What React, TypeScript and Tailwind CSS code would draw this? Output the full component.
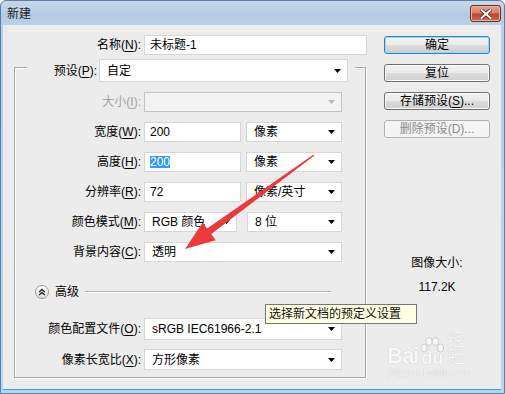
import * as React from "react";

const U = ({ children }: { children: React.ReactNode }) => (
  <span className="underline underline-offset-[2px]">{children}</span>
);

const Caret = ({ off }: { off?: boolean }) => (
  <svg width="7" height="4" viewBox="0 0 7 4" className="shrink-0">
    <polygon points="0,0 7,0 3.5,4" fill={off ? "#b8b8b8" : "#000"} />
  </svg>
);

const Select = ({ text, className, off }: { text?: React.ReactNode; className: string; off?: boolean }) => (
  <div
    className={`h-full flex items-center justify-between pl-[7px] pr-[6px] border ${
      off ? "bg-[#f3f3f3] border-[#c2c2c2]" : "bg-white border-[#d6d6d6]"
    } ${className}`}
  >
    <span className="whitespace-nowrap">{text}</span>
    <Caret off={off} />
  </div>
);

const Field = ({ children, className }: { children?: React.ReactNode; className: string }) => (
  <div className={`h-full flex items-center pl-[5px] bg-white border border-[#d6d6d6] ${className}`}>{children}</div>
);

const Row = ({ label, children, className, muted }: { label: React.ReactNode; children: React.ReactNode; className: string; muted?: boolean }) => (
  <div className={`flex items-center ${className}`}>
    <div className={`w-[126px] text-right ${muted ? "text-[#a3a3a3]" : ""}`}>{label}</div>
    <div className="ml-[3px] flex h-full">{children}</div>
  </div>
);

const Btn = ({ children, kind }: { children: React.ReactNode; kind?: "default" | "off" }) => {
  const look =
    kind === "off"
      ? "border-[#adb2b5] bg-[#f4f4f4] text-[#8a8a8a]"
      : kind === "default"
      ? "border-[#3c7fb1] bg-[linear-gradient(to_bottom,#f2f2f2_0%,#ebebeb_50%,#dddddd_50%,#cfcfcf_100%)] shadow-[inset_0_0_0_1px_#8fdcfa]"
      : "border-[#707070] bg-[linear-gradient(to_bottom,#f2f2f2_0%,#ebebeb_50%,#dddddd_50%,#cfcfcf_100%)] shadow-[inset_0_0_0_1px_#fbfbfb]";
  return (
    <div className={`h-[18px] w-[106px] rounded-[3px] border flex items-center justify-center leading-none ${look}`}>
      {children}
    </div>
  );
};

export default function App() {
  return (
    <div className="relative w-[505px] h-[394px] overflow-hidden rounded-t-[6px] border border-[#5c7ea3] bg-[linear-gradient(to_bottom,#c9d8ea_0px,#b5cbe4_14px,#b9d1ec_25px,#bcd5ef_100%)] font-['Liberation_Sans','Noto_Sans_CJK_SC',sans-serif] text-[12px] text-black">
      {/* title bar */}
      <div className="h-[24px] flex items-start justify-between pl-[6px] pr-[3px]">
        <span className="mt-[6px] leading-[14px] text-[#1b1b1b]">新建</span>
        <div className="mt-[4px] w-[31px] h-[17px] rounded-[3px] border border-[#6b2b22] bg-[linear-gradient(to_bottom,#e6a793_0%,#d67a63_45%,#c2452d_55%,#cf6a4f_100%)] shadow-[inset_0_0_0_1px_#eab6a6] flex items-center justify-center">
          <svg width="12" height="10" viewBox="0 0 12 10">
            <path d="M1.5 1 L10.5 9 M10.5 1 L1.5 9" stroke="#5a2a22" strokeWidth="3.6" strokeLinecap="square" />
            <path d="M1.5 1 L10.5 9 M10.5 1 L1.5 9" stroke="#ffffff" strokeWidth="2" strokeLinecap="square" />
          </svg>
        </div>
      </div>

      {/* client area */}
      <div className="ml-[2px] mr-[3px] h-[365px] bg-[#ececec] border-b border-[#3d9ad4] flex">
        {/* left column */}
        <div className="w-[368px] pt-[10px]">
          <div className="ml-[11px] flex items-center h-[20px]">
            <div className="w-[127px] text-right">
              名称(<U>N</U>):
            </div>
            <Field className="ml-[3px] w-[223px]">未标题-1</Field>
          </div>

          <div className="ml-[11px] mt-[12px] w-[352px] h-[311px] border border-[#a8a8a8] shadow-[1px_1px_0_#ffffff,inset_1px_1px_0_#ffffff]">
            {/* preset, sitting on the top edge */}
            <div className="-mt-[9px] ml-[12px] w-[328px] h-[23px] flex items-center bg-[#ececec]">
              <div className="w-[70px] text-right">
                预设(<U>P</U>):
              </div>
              <Select className="ml-[2px] w-[249px]" text="自定" />
            </div>

            <div className="mt-[10px] flex flex-col gap-[10px]">
              <Row className="h-[20px]" muted label={<>大小(<U>I</U>):</>}>
                <Select className="w-[198px]" off />
              </Row>
              <Row className="h-[20px]" label={<>宽度(<U>W</U>):</>}>
                <Field className="w-[97px]">200</Field>
                <Select className="ml-[5px] w-[96px]" text="像素" />
              </Row>
              <Row className="h-[20px]" label={<>高度(<U>H</U>):</>}>
                <Field className="w-[97px]">
                  <span className="inline-block h-[12px] leading-[12px] bg-[#3399ff] text-white">200</span>
                </Field>
                <Select className="ml-[5px] w-[96px]" text="像素" />
              </Row>
              <Row className="h-[20px]" label={<>分辨率(<U>R</U>):</>}>
                <Field className="w-[97px]">72</Field>
                <Select className="ml-[5px] w-[96px]" text="像素/英寸" />
              </Row>
              <Row className="h-[20px]" label={<>颜色模式(<U>M</U>):</>}>
                <Select className="w-[93px] pl-[5px] pr-[5px]" text="RGB 颜色" />
                <Select className="ml-[10px] w-[95px] pl-[6px]" text="8 位" />
              </Row>
              <Row className="h-[20px]" label={<>背景内容(<U>C</U>):</>}>
                <Select className="w-[198px] pl-[5px]" text="透明" />
              </Row>
            </div>

            {/* advanced */}
            <div className="mt-[23px] ml-[20px] h-[14px] flex items-center">
              <div className="w-[14px] h-[14px] rounded-full border border-[#9a9a9a] bg-[linear-gradient(to_bottom,#ffffff,#dcdcdc)] flex items-center justify-center">
                <svg width="8" height="8" viewBox="0 0 8 8">
                  <path d="M1.2 4 L4 1.4 L6.8 4 M1.2 7 L4 4.4 L6.8 7" stroke="#222" strokeWidth="1.3" fill="none" />
                </svg>
              </div>
              <span className="ml-[6px]">高级</span>
              <div className="ml-[6px] w-[246px] h-[2px] border-t border-[#b2b2b2] border-b border-b-white" />
            </div>

            <div className="mt-[19px] flex flex-col gap-[9px]">
              <Row className="h-[22px]" label={<>颜色配置文件(<U>O</U>):</>}>
                <Select className="w-[198px] pl-[5px]" text="sRGB IEC61966-2.1" />
              </Row>
              <Row className="h-[21px]" label={<>像素长宽比(<U>X</U>):</>}>
                <Select className="w-[198px] pl-[5px]" text="方形像素" />
              </Row>
            </div>
          </div>
        </div>

        {/* right column */}
        <div className="ml-[13px] w-[106px] pt-[11px] flex flex-col">
          <div className="flex flex-col gap-[10px]">
            <Btn kind="default">确定</Btn>
            <Btn>复位</Btn>
            <Btn>
              存储预设(<U>S</U>)...
            </Btn>
            <Btn kind="off">删除预设(D)...</Btn>
          </div>
          <div className="mt-[118px] text-center leading-[14px]">图像大小:</div>
          <div className="mt-[10px] text-center leading-[14px]">117.2K</div>
        </div>
      </div>

      {/* tooltip */}
      <div className="absolute left-[264px] top-[303px] w-[152px] h-[20px] pl-[3px] flex items-center bg-[#ffffe1] border border-[#767676] text-[#111]">
        选择新文档的预定义设置
      </div>

      {/* watermark */}
      <div className="absolute left-[386px] top-[336px] w-[94px] text-[#f7f7f7] [text-shadow:0_0_1px_#b5b5b5] pointer-events-none">
        <div className="relative flex items-end h-[30px] leading-none">
          <span className="text-[22px] font-bold tracking-[-1px]">Bai</span>
          <div className="relative ml-[1px] w-[26px] h-[30px] flex items-end justify-center">
            <svg className="absolute left-0 top-0" width="26" height="22" viewBox="0 0 26 22">
              <g fill="#f7f7f7" stroke="#c4c4c4" strokeWidth="0.8">
                <ellipse cx="5" cy="11" rx="3.2" ry="4" />
                <ellipse cx="10" cy="4.5" rx="3.2" ry="4" />
                <ellipse cx="16.5" cy="4.5" rx="3.2" ry="4" />
                <ellipse cx="21.5" cy="11" rx="3.2" ry="4" />
              </g>
            </svg>
            <span className="relative text-[18px] font-bold">du</span>
          </div>
          <span className="text-[17px] ml-[2px] mb-[1px]">经验</span>
        </div>
        <div className="text-[10px] leading-[12px] tracking-[0.2px]">jingyan.baidu.com</div>
      </div>

      {/* red annotation arrow */}
      <svg className="absolute left-0 top-0 pointer-events-none" width="505" height="394" viewBox="0 0 505 394">
        <polygon
          points="313.4,154.5 210.3,233.1 214.7,239.2 184,248 201.7,221.4 206.1,227.5 312.6,153.5"
          fill="#ea3a3a"
        />
      </svg>
    </div>
  );
}
